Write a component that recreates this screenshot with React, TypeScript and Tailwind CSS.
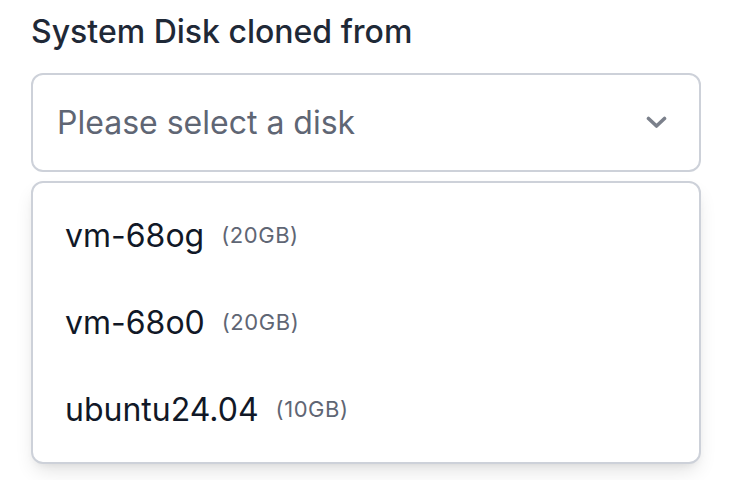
const disks = [
  { name: "vm-68og", size: "20GB" },
  { name: "vm-68o0", size: "20GB" },
  { name: "ubuntu24.04", size: "10GB" },
];

export default function App() {
  return (
    <div className="h-[480px] w-[736px] overflow-hidden bg-white pl-[31px] pr-[35px] pt-[12px] font-['Inter',sans-serif]">
      <label className="block text-[32px] font-medium leading-[40px] text-[#1f2937]">
        System Disk cloned from
      </label>
      <div className="mt-[21px] flex h-[99px] items-center justify-between rounded-[12px] border-2 border-[#cdd1d9] pl-[24px] pr-[32px]">
        <span className="text-[32px] text-[#5f6674]">Please select a disk</span>
        <svg width="21" height="13" viewBox="0 0 21 13" fill="none" className="text-[#7b808b]">
          <path d="M2.5 2.5 L10.5 10 L18.5 2.5" stroke="currentColor" strokeWidth="3.6" strokeLinecap="round" strokeLinejoin="round" />
        </svg>
      </div>
      <ul className="mt-[9px] rounded-[12px] border-2 border-[#cdd1d9] bg-white py-[9px] shadow-[0_10px_20px_-4px_rgba(0,0,0,0.12),0_4px_8px_-4px_rgba(0,0,0,0.08)]">
        {disks.map((d) => (
          <li key={d.name} className="flex h-[87px] items-center px-[32px]">
            <span className="text-[32px] text-[#111827]">{d.name}</span>
            <span className="ml-[17px] text-[22px] tracking-wide text-[#5f6674]">({d.size})</span>
          </li>
        ))}
      </ul>
    </div>
  );
}
